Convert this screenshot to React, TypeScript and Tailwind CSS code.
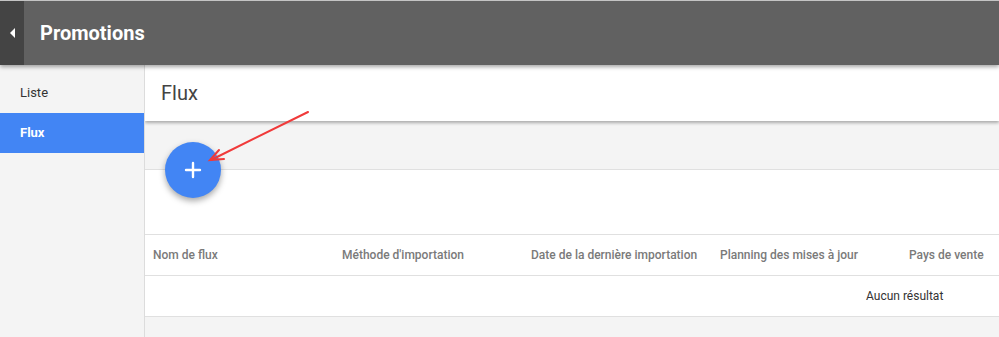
import React from 'react';
import { Plus } from 'lucide-react';

const columns = [
  'Nom de flux',
  "Méthode d'importation",
  'Date de la dernière importation',
  'Planning des mises à jour',
  'Pays de vente',
];

const App = () => {
  return (
    <div className="relative w-[999px] h-[337px] overflow-hidden bg-[#f4f4f4] font-['Roboto','Liberation_Sans',sans-serif]">
      {/* top bar */}
      <header className="relative z-20 h-[65px] flex border-t border-[#c4c4c4] bg-[#616161] shadow-[0_2px_4px_rgba(0,0,0,0.35)]">
        <div className="w-6 bg-[#444444] flex items-center justify-center">
          <span className="block w-0 h-0 border-y-[5px] border-y-transparent border-r-[5px] border-r-white" />
        </div>
        <h1 className="pl-4 flex items-center text-[20px] font-bold text-white">Promotions</h1>
      </header>

      <div className="flex h-[272px]">
        {/* side menu */}
        <nav className="w-[145px] shrink-0 border-r border-[#dcdcdc] bg-[#f4f4f4] pt-2">
          <div className="h-10 flex items-center pl-5 text-[13px] text-[#333]">Liste</div>
          <div className="h-10 flex items-center pl-5 text-[13px] font-bold text-white bg-[#4285f4]">Flux</div>
        </nav>

        <main className="flex-1 min-w-0 overflow-hidden">
          <div className="relative z-10 h-14 bg-white flex items-center pl-4 text-[20px] text-[#444] shadow-[0_2px_3px_rgba(0,0,0,0.3)]">
            Flux
          </div>
          <div className="h-[49px] border-b border-[#e0e0e0]" />
          <div className="bg-white">
            <div className="h-[65px] border-b border-[#e0e0e0]" />
            <div className="flex h-[41px] border-b border-[#e0e0e0] w-max">
              {columns.map(c => (
                <div key={c} className="w-[189px] shrink-0 pl-2 flex items-center text-[12px] font-medium text-[#7a7a7a]">
                  {c}
                </div>
              ))}
            </div>
            <div className="h-[41px] border-b border-[#e0e0e0] flex items-center pl-[721px] text-[12px] text-[#333]">
              Aucun résultat
            </div>
          </div>
        </main>
      </div>

      {/* add button */}
      <button className="absolute z-30 left-[165px] top-[142px] w-14 h-14 rounded-full bg-[#4285f4] text-white flex items-center justify-center shadow-[0_3px_6px_rgba(0,0,0,0.35)]">
        <Plus size={24} strokeWidth={2.4} />
      </button>

      {/* annotation arrow */}
      <svg className="absolute z-40 left-0 top-0 pointer-events-none" width="999" height="337">
        <g stroke="#f03a3a" strokeWidth="2" fill="none" strokeLinecap="round">
          <line x1="308" y1="112" x2="211" y2="160" />
          <polyline points="219,150 210,160 224,159" />
        </g>
      </svg>
    </div>
  );
};

export default App;
